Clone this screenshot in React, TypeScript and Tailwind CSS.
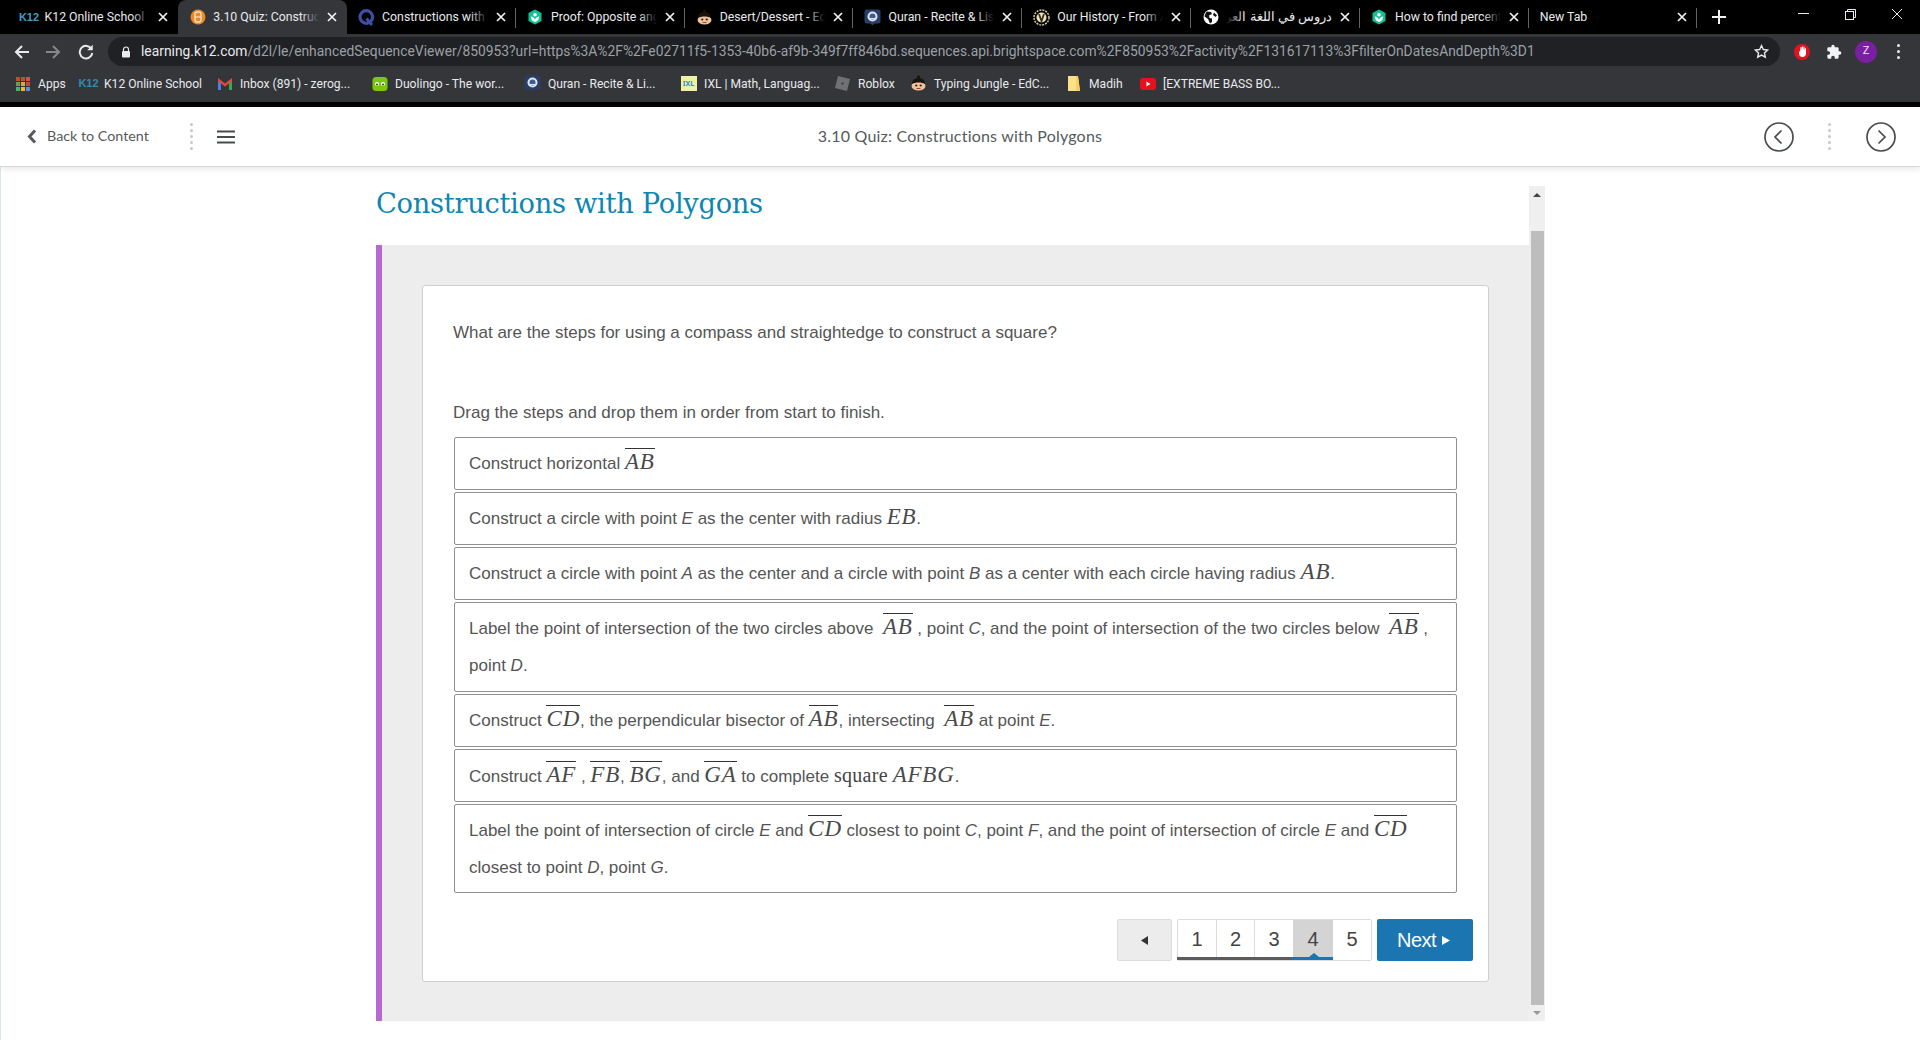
import React from "react";

const Khan = () => (
  <svg width="16" height="16" viewBox="0 0 16 16"><path d="M8 0.5 14.5 4v8L8 15.5 1.500 12V4z" fill="#14bf96" /><circle cx="8" cy="5.800" r="1.800" fill="#fff" /><path d="M3.800 7.500C6 7.500 7.500 9 8 11c.5-2 2-3.500 4.200-3.500 0 3-1.800 5-4.200 5.500-2.400-.5-4.200-2.500-4.200-5.500z" fill="#fff" /></svg>
);
const Face = () => (
  <svg width="17" height="17" viewBox="0 0 17 17"><circle cx="8.500" cy="2" r="1.500" fill="#111" /><ellipse cx="8.500" cy="7" rx="6" ry="4" fill="#1c120c" /><ellipse cx="8.500" cy="11" rx="7" ry="4.500" fill="#eec39a" /><path d="M2 9c3-2 10-2 13 0l-1-3H3z" fill="#1c120c" /><circle cx="6.300" cy="10.500" r="1.100" fill="#222" /><circle cx="10.700" cy="10.500" r="1.100" fill="#222" /><path d="M6.500 13.500h4" stroke="#b33" strokeWidth="1" /></svg>
);
const QuranIcon = () => (
  <svg width="17" height="17" viewBox="0 0 17 17"><rect x="0.500" y="0.500" width="16" height="14" rx="2" fill="#2b3d66" /><path d="M6 14h5l-2.500 2.500z" fill="#2b3d66" /><circle cx="8.500" cy="7.500" r="5" fill="#dfe6f0" /><circle cx="8.500" cy="7.500" r="3" fill="#3f5b94" /><path d="M6 9.500h5" stroke="#dfe6f0" strokeWidth="1" /></svg>
);
const Bright = () => (
  <svg width="16" height="16" viewBox="0 0 16 16"><circle cx="8" cy="8" r="7.500" fill="#e8892a" /><rect x="5" y="3" width="6" height="10" rx="2" fill="none" stroke="#fbe2bd" strokeWidth="1.300" /><path d="M5 8h6" stroke="#fbe2bd" strokeWidth="1.300" /></svg>
);
const Quora = () => (
  <svg width="17" height="17" viewBox="0 0 17 17"><circle cx="8.300" cy="8" r="6.300" fill="none" stroke="#3d4fa8" strokeWidth="3.200" /><path d="M8.500 9.500l5.500 6.500" stroke="#3d4fa8" strokeWidth="3" /></svg>
);
const History = () => (
  <svg width="17" height="17" viewBox="0 0 17 17"><circle cx="8.500" cy="8.500" r="7.500" fill="none" stroke="#cfc49a" strokeWidth="1.500" strokeDasharray="2 1" /><circle cx="8.500" cy="8.500" r="5" fill="#e8e0c0" /><path d="M6 5l2.500 7L11 5" stroke="#3a2f15" strokeWidth="1.800" fill="none" /></svg>
);
const Globe = () => (
  <svg width="16" height="16" viewBox="0 0 16 16"><circle cx="8" cy="8" r="7.500" fill="#fff" /><path d="M4 2.500l4 .5 1 2-3 1.500L6.500 9 9 9.500 9 13l-2 1.500L5 10 1.500 7.500C2 5 3 3.500 4 2.500zM11 3.500l3 3-1.500 1.500-2.500-2z" fill="#111" /></svg>
);
const Apps = () => (
  <svg width="14" height="14" viewBox="0 0 14 14">
    {[["#c9473c", 0, 0], ["#b5533f", 5, 0], ["#d8544a", 10, 0], ["#6d9b52", 0, 5], ["#e0a63a", 5, 5], ["#c9473c", 10, 5], ["#4ab460", 0, 10], ["#f0b72d", 5, 10], ["#5a8fd8", 10, 10]].map(([c, x, y], i) => (
      <rect key={i} x={x as number} y={y as number} width="4" height="4" fill={c as string} />
    ))}
  </svg>
);
const Gmail = () => (
  <svg width="16" height="13" viewBox="0 0 16 13"><path d="M1 2v11h3V5z" fill="#4a7fe8" /><path d="M15 2v11h-3V5z" fill="#3aa757" /><path d="M1 1l7 5.500L15 1v3l-7 5.500L1 4z" fill="#e8453c" /></svg>
);
const Duo = () => (
  <svg width="16" height="16" viewBox="0 0 16 16"><rect x="0.500" y="1" width="15" height="14" rx="3.500" fill="#7ac70c" /><circle cx="5" cy="8" r="2" fill="#fff" /><circle cx="11" cy="8" r="2" fill="#fff" /><circle cx="5" cy="8.500" r="1" fill="#333" /><circle cx="11" cy="8.500" r="1" fill="#333" /></svg>
);
const Ixl = () => (
  <span className="flex h-[15px] w-[16px] items-center justify-center bg-[#eef0a8] text-[7px] font-bold leading-none text-[#2a8fc0]">IXL</span>
);
const Roblox = () => (
  <svg width="17" height="17" viewBox="0 0 17 17"><path d="M4 1l12 3-3 12L1 13z" fill="#6f7175" /><rect x="7.500" y="7.500" width="2" height="2" fill="#3a3b3d" /></svg>
);
const Folder = () => (
  <svg width="14" height="17" viewBox="0 0 14 17"><path d="M1 1h10l2 15H1z" fill="#fbe08a" /><path d="M9 1h2l2 15H9z" fill="#f5cf5b" /></svg>
);
const Yt = () => (
  <svg width="16" height="12" viewBox="0 0 16 12"><rect width="16" height="12" rx="3" fill="#e5121e" /><path d="M6.500 3.500v5l4-2.500z" fill="#fff" /></svg>
);
const K12Tab = () => <span className="font-['Liberation_Sans',sans-serif] text-[11px] font-bold leading-none text-[#3f9dc4]">K12</span>;

const X = () => (
  <svg width="10" height="10" viewBox="0 0 10 10" className="shrink-0"><path d="M1 1l8 8M9 1l-8 8" stroke="#f1f3f4" strokeWidth="1.700" /></svg>
);

const sans = "font-['Roboto',sans-serif]";

type TabT = { icon: React.ReactNode; title: string; rtl?: boolean; active?: boolean; sep?: boolean };
const tabs: TabT[] = [
  { icon: <K12Tab />, title: "K12 Online School" },
  { icon: <Bright />, title: "3.10 Quiz: Constructions with Polygons", active: true },
  { icon: <Quora />, title: "Constructions with polygons", sep: true },
  { icon: <Khan />, title: "Proof: Opposite angles", sep: true },
  { icon: <Face />, title: "Desert/Dessert - EdClub", sep: true },
  { icon: <QuranIcon />, title: "Quran - Recite & Listen", sep: true },
  { icon: <History />, title: "Our History - From Adam", sep: true },
  { icon: <Globe />, title: "دروس في اللغة العربية", rtl: true, sep: true },
  { icon: <Khan />, title: "How to find percentages", sep: true },
  { icon: null, title: "New Tab", sep: true },
];

const Tab = ({ t }: { t: TabT }) => (
  <div className={`relative flex h-[34px] w-[168.800px] shrink-0 items-center pl-[11px] pr-[10px] ${t.active ? "rounded-t-[8px] bg-[#35363a]" : ""}`}>
    <span className="flex h-[16px] w-[17px] shrink-0 items-center justify-center">{t.icon}</span>
    <span
      dir={t.rtl ? "rtl" : undefined}
      className={`relative mr-[8px] min-w-0 flex-1 overflow-hidden whitespace-nowrap ${t.rtl ? "text-[12.700px]" : "text-[12.300px]"} text-[#e8eaed] ${t.icon ? "ml-[7px]" : "-ml-[17px]"} ${sans}`}
    >
      {t.title}
      <span className={`absolute inset-y-0 w-[18px] ${t.rtl ? "left-0 bg-gradient-to-r" : "right-0 bg-gradient-to-l"} ${t.active ? "from-[#35363a]" : "from-black"} to-transparent`} />
    </span>
    <X />
    {t.sep && <span className="absolute right-0 top-[8px] h-[20px] w-px bg-[#5f6368]" />}
  </div>
);

const TabBar = () => (
  <div className="flex h-[34px] shrink-0 items-center bg-black pl-[9.500px]">
    {tabs.map((t, i) => <Tab key={i} t={t} />)}
    <svg width="14" height="14" viewBox="0 0 14 14" className="ml-[15px]"><path d="M7 0v14M0 7h14" stroke="#f1f3f4" strokeWidth="2" /></svg>
    <div className="ml-auto flex h-full items-start">
      <div className="flex h-[28px] w-[47px] items-center justify-center"><svg width="11" height="2"><rect width="11" height="1" fill="#e8eaed" /></svg></div>
      <div className="flex h-[28px] w-[47px] items-center justify-center">
        <svg width="11" height="11" viewBox="0 0 11 11" fill="none" stroke="#e8eaed"><rect x="0.500" y="2.500" width="8" height="8" /><path d="M2.500 2.500v-2h8v8h-2" /></svg>
      </div>
      <div className="flex h-[28px] w-[46px] items-center justify-center">
        <svg width="12" height="12" viewBox="0 0 12 12"><path d="M1 1l10 10M11 1L1 11" stroke="#e8eaed" /></svg>
      </div>
    </div>
  </div>
);

const Toolbar = () => (
  <div className="flex h-[33px] shrink-0 items-center bg-[#35363a] pt-[2px]">
    <svg width="16" height="16" viewBox="0 0 16 16" fill="none" stroke="#e8eaed" strokeWidth="2" className="ml-[14px]"><path d="M15 8H2M8 2 2 8l6 6" /></svg>
    <svg width="16" height="16" viewBox="0 0 16 16" fill="none" stroke="#85878a" strokeWidth="2" className="ml-[15px]"><path d="M1 8h13M8 2l6 6-6 6" /></svg>
    <svg width="16" height="16" viewBox="0 0 16 16" fill="none" stroke="#e8eaed" strokeWidth="2" className="ml-[17px]"><path d="M13.500 5A6.300 6.300 0 1 0 14.300 9" /><path d="M14.500 1v5h-5" fill="#e8eaed" strokeWidth="0.500" /></svg>
    <div className="ml-[14px] flex h-[29px] w-[1672px] items-center rounded-full bg-[#202124] pl-[13px]">
      <svg width="10" height="12" viewBox="0 0 10 12"><path d="M2.500 5V3.500a2.500 2.500 0 0 1 5 0V5" fill="none" stroke="#e8eaed" strokeWidth="1.200" /><rect x="1" y="5" width="8" height="6.500" rx="1" fill="#e8eaed" /></svg>
      <span className={`ml-[10px] whitespace-nowrap text-[13.830px] text-[#9aa0a6] ${sans}`}>
        <span className="text-[#e8eaed]">learning.k12.com</span>/d2l/le/enhancedSequenceViewer/850953?url=https%3A%2F%2Fe02711f5-1353-40b6-af9b-349f7ff846bd.sequences.api.brightspace.com%2F850953%2Factivity%2F131617113%3FfilterOnDatesAndDepth%3D1
      </span>
      <svg width="15" height="15" viewBox="0 0 24 24" fill="none" stroke="#e8eaed" strokeWidth="2.200" className="ml-auto mr-[11px]"><path d="M12 2.500l2.900 6.300 6.900.8-5.100 4.700 1.400 6.800-6.100-3.400-6.100 3.400 1.400-6.800L2.200 9.600l6.900-.8z" /></svg>
    </div>
    <div className="ml-[14px] flex h-[16px] w-[16px] items-center justify-center rounded-full bg-[#e0131e]">
      <svg width="9" height="11" viewBox="0 0 9 11"><path d="M1 5v2.500C1 9.500 2.500 11 4.500 11S8 9.500 8 7.500V2.500L7 2 6.500 5V1L5.500 .5 5 5V.5H4L3.500 5V1L2.500 1 2 6z" fill="#fff" /></svg>
    </div>
    <svg width="16" height="16" viewBox="0 0 24 24" className="ml-[16px]"><path fill="#f1f3f4" d="M20.500 11H19V7a2 2 0 0 0-2-2h-4V3.500a2.500 2.500 0 0 0-5 0V5H4a2 2 0 0 0-2 2v3.800h1.500a2.700 2.700 0 0 1 0 5.400H2V20a2 2 0 0 0 2 2h3.800v-1.500a2.700 2.700 0 0 1 5.400 0V22H17a2 2 0 0 0 2-2v-4h1.500a2.500 2.500 0 0 0 0-5z" /></svg>
    <div className={`ml-[13px] flex h-[22px] w-[22px] items-center justify-center rounded-full bg-[#7b1fa2] text-[11px] text-[#f0e4f5] ${sans}`}>Z</div>
    <div className="ml-[20px] flex flex-col gap-[3px]">
      <span className="h-[3px] w-[3px] rounded-full bg-[#e8eaed]" />
      <span className="h-[3px] w-[3px] rounded-full bg-[#e8eaed]" />
      <span className="h-[3px] w-[3px] rounded-full bg-[#e8eaed]" />
    </div>
  </div>
);

const marks: { icon: React.ReactNode; label: string; w: string }[] = [
  { icon: <Apps />, label: "Apps", w: "w-[66px]" },
  { icon: <span className="font-['Liberation_Sans',sans-serif] text-[11px] font-bold leading-none text-[#2f8db0]">K12</span>, label: "K12 Online School", w: "w-[136px]" },
  { icon: <Gmail />, label: "Inbox (891) - zerog...", w: "w-[155px]" },
  { icon: <Duo />, label: "Duolingo - The wor...", w: "w-[153px]" },
  { icon: <QuranIcon />, label: "Quran - Recite & Li...", w: "w-[156px]" },
  { icon: <Ixl />, label: "IXL | Math, Languag...", w: "w-[154px]" },
  { icon: <Roblox />, label: "Roblox", w: "w-[76px]" },
  { icon: <Face />, label: "Typing Jungle - EdC...", w: "w-[155px]" },
  { icon: <Folder />, label: "Madih", w: "w-[74px]" },
  { icon: <Yt />, label: "[EXTREME BASS BO...", w: "w-[170px]" },
];

const Bookmarks = () => (
  <div className="flex h-[35px] shrink-0 items-center bg-[#35363a] pb-[1px] pl-[14px]">
    {marks.map((m) => (
      <div key={m.label} className={`flex items-center ${m.w} shrink-0`}>
        <span className="flex w-[17px] shrink-0 items-center justify-center">{m.icon}</span>
        <span className={`ml-[7px] whitespace-nowrap text-[12.100px] text-[#e8eaed] ${sans}`}>{m.label}</span>
      </div>
    ))}
  </div>
);

const Dots = () => (
  <div className="flex flex-col gap-[3px]">
    {[0, 1, 2, 3, 4].map((i) => <span key={i} className="h-[3px] w-[3px] rounded-full bg-[#c5c8ca]" />)}
  </div>
);

const Header = () => (
  <div className="relative z-10 flex h-[60px] shrink-0 items-center border-b border-[#d8d8d8] bg-white shadow-[0_2px_6px_rgba(0,0,0,0.1)] font-['Lato',sans-serif] text-[#565a5c]">
    <svg width="10" height="15" viewBox="0 0 10 15" className="ml-[27px]"><path d="M8 1.500 2.500 7.500 8 13.500" fill="none" stroke="#565a5c" strokeWidth="3" /></svg>
    <span className="ml-[10px] pb-[2px] text-[14.300px]">Back to Content</span>
    <span className="ml-[41px]"><Dots /></span>
    <svg width="18" height="14" viewBox="0 0 18 14" className="ml-[24px]"><path d="M0 1.500h18M0 7h18M0 12.500h18" stroke="#494c4e" strokeWidth="2" /></svg>
    <span className="pointer-events-none absolute left-0 right-0 pb-[2px] text-center text-[16px] tracking-[0.200px]">3.10 Quiz: Constructions with Polygons</span>
    <div className="ml-auto flex items-center">
      <svg width="30" height="30" viewBox="0 0 30 30" fill="none" stroke="#494c4e" strokeWidth="1.700"><circle cx="15" cy="15" r="14" /><path d="M17.500 8.500 11 15l6.500 6.500" /></svg>
      <span className="ml-[34px]"><Dots /></span>
      <svg width="30" height="30" viewBox="0 0 30 30" fill="none" stroke="#494c4e" strokeWidth="1.700" className="ml-[35px] mr-[24px]"><circle cx="15" cy="15" r="14" /><path d="M12.500 8.500 19 15l-6.500 6.500" /></svg>
    </div>
  </div>
);

const M = ({ children, over }: { children: React.ReactNode; over?: boolean }) => (
  <span className={`inline-block font-['Liberation_Serif',serif] text-[23px] italic leading-[26px] tracking-[0.800px] text-[#4a4a4a] ${over ? "border-t border-[#333]" : ""}`}>{children}</span>
);
const I = ({ children }: { children: React.ReactNode }) => <i>{children}</i>;

const Item = ({ children, h = "h-[53px]" }: { children: React.ReactNode; h?: string }) => (
  <div className={`rounded-[2px] border border-[#909090] px-[14px] pt-[7px] leading-[37px] ${h}`}>
    {children}
  </div>
);

const Pager = () => (
  <div className="-mr-[16px] mt-[26px] flex h-[42px] justify-end gap-[5px] text-[20px] text-[#444]">
    <div className="flex w-[55px] items-center justify-center rounded-[2px] border border-[#dcdcdc] bg-[#ececec]">
      <svg width="8" height="9" viewBox="0 0 8 9"><path d="M7 0v9L0 4.500z" fill="#333" /></svg>
    </div>
    <div className="relative flex w-[195px] rounded-[2px] border border-[#dcdcdc] bg-white">
      {[
        { n: 1, w: "w-[39px]" },
        { n: 2, w: "w-[38px]" },
        { n: 3, w: "w-[38px]" },
        { n: 4, w: "w-[40px]", a: true },
        { n: 5, w: "flex-1" },
      ].map((p) => (
        <div key={p.n} className={`flex items-center justify-center pb-[3px] ${p.w} ${p.a ? "bg-[#d4d4d4]" : ""} ${p.n < 3 ? "border-r border-[#dcdcdc]" : ""}`}>{p.n}</div>
      ))}
      <span className="absolute -left-px bottom-0 h-[3px] w-[116px] bg-[#5c5c5c]" />
      <span className="absolute bottom-0 left-[114px] h-[3px] w-[41px] bg-[#1a75b0]" />
      <span className="absolute bottom-[3px] left-[131px] h-0 w-0 border-x-[5px] border-b-[4px] border-x-transparent border-b-[#1a75b0]" />
    </div>
    <div className="flex w-[96px] items-center justify-center gap-[6px] rounded-[2px] bg-[#1a75b0] pr-[3px] tracking-[-0.500px] text-white">
      Next
      <svg width="8" height="9" viewBox="0 0 8 9"><path d="M0 0v9l8-4.500z" fill="#fff" /></svg>
    </div>
  </div>
);

export default function App() {
  return (
    <div className="flex h-[1040px] w-[1920px] flex-col overflow-hidden bg-black">
      <TabBar />
      <Toolbar />
      <Bookmarks />
      <div className="h-[5px] shrink-0 bg-black" />
      <Header />
      <div className="flex min-h-0 flex-1 border-l border-[#dde5ec] bg-white">
        <div className="w-[375px] shrink-0" />
        <div className="w-[1153px] shrink-0">
          <h1 className="flex h-[78px] items-center pb-[5px] font-['DejaVu_Serif',serif] text-[27.300px] font-normal leading-none tracking-[-0.300px] text-[#0e86b4]">Constructions with Polygons</h1>
          <div className="h-[776px] border-l-[6px] border-[#b668d0] bg-[#ededed] pl-[40px] pr-[40px] pt-[40px] font-['Liberation_Sans',Arial,sans-serif] text-[17px] text-[#555]">
            <div className="h-[697px] rounded-[3px] border border-[#cfcfcf] bg-white px-[31px] pt-[35px]">
              <p className="-ml-px h-[24px] leading-[24px]">What are the steps for using a compass and straightedge to construct a square?</p>
              <p className="-ml-px mt-[56px] h-[24px] leading-[24px]">Drag the steps and drop them in order from start to finish.</p>
              <div className="mt-[12px] flex flex-col gap-[2px]">
                <Item>Construct horizontal <M over>AB</M></Item>
                <Item>Construct a circle with point <I>E</I> as the center with radius <M>EB</M>.</Item>
                <Item>Construct a circle with point <I>A</I> as the center and a circle with point <I>B</I> as a center with each circle having radius <M>AB</M>.</Item>
                <Item h="h-[90px]">Label the point of intersection of the two circles above &nbsp;<M over>AB</M> , point <I>C</I>, and the point of intersection of the two circles below &nbsp;<M over>AB</M> , point <I>D</I>.</Item>
                <Item>Construct <M over>CD</M>, the perpendicular bisector of <M over>AB</M>, intersecting &nbsp;<M over>AB</M> at point <I>E</I>.</Item>
                <Item>Construct <M over>AF</M> , <M over>FB</M>, <M over>BG</M>, and <M over>GA</M> to complete <span className="font-['Liberation_Serif',serif] text-[20px] tracking-[0.300px] text-[#444]">square</span> <M>AFBG</M>.</Item>
                <Item h="h-[89px]">Label the point of intersection of circle <I>E</I> and <M over>CD</M> closest to point <I>C</I>, point <I>F</I>, and the point of intersection of circle <I>E</I> and <M over>CD</M> closest to point <I>D</I>, point <I>G</I>.</Item>
              </div>
              <Pager />
            </div>
          </div>
        </div>
        <div className="mt-[19px] flex h-[835px] w-[16px] shrink-0 flex-col items-center bg-[#efefef]">
          <div className="flex h-[45px] shrink-0 items-start pt-[7px]"><span className="h-0 w-0 border-x-[4px] border-b-[4px] border-x-transparent border-b-[#444]" /></div>
          <div className="h-[774px] w-[13px] shrink-0 bg-[#bdbdbd]" />
          <div className="flex flex-1 items-center"><span className="h-0 w-0 border-x-[4px] border-t-[4px] border-x-transparent border-t-[#999]" /></div>
        </div>
      </div>
    </div>
  );
}
